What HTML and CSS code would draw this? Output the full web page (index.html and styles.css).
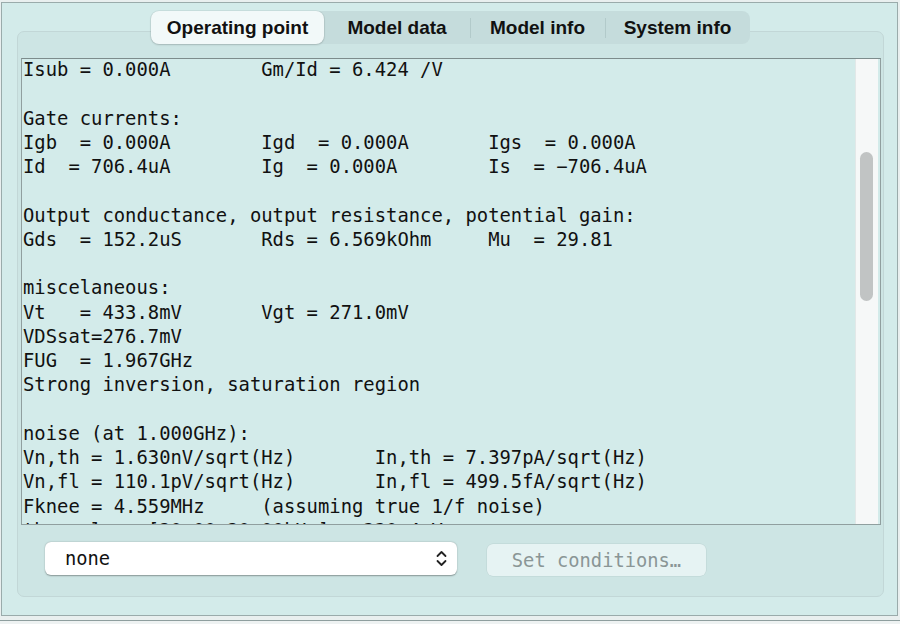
FILE: index.html
```html
<!DOCTYPE html>
<html lang="en">

<head>
    <meta charset="UTF-8">
    <title>Operating point</title>
    <link rel="stylesheet" href="styles.css">
</head>

<body>
    <div class="window">
        <!-- tab selector, sits over the top edge of the panel -->
        <div class="tabs">
            <div class="tab active">Operating point</div>
            <div class="tab">Model data</div>
            <div class="tab sep">Model info</div>
            <div class="tab sep">System info</div>
        </div>

        <div class="panel">
            <div class="output">
<pre class="report">Isub = 0.000A        Gm/Id = 6.424 /V

Gate currents:
Igb  = 0.000A        Igd  = 0.000A       Igs  = 0.000A
Id  = 706.4uA        Ig  = 0.000A        Is  = &#8722;706.4uA

Output conductance, output resistance, potential gain:
Gds  = 152.2uS       Rds = 6.569kOhm     Mu  = 29.81

miscelaneous:
Vt   = 433.8mV       Vgt = 271.0mV
VDSsat=276.7mV
FUG  = 1.967GHz
Strong inversion, saturation region

noise (at 1.000GHz):
Vn,th = 1.630nV/sqrt(Hz)       In,th = 7.397pA/sqrt(Hz)
Vn,fl = 110.1pV/sqrt(Hz)       In,fl = 499.5fA/sqrt(Hz)
Fknee = 4.559MHz     (assuming true 1/f noise)
thermal    [20.00-20.00kHz] = 330.4uV</pre>
                <div class="scrolltrack">
                    <div class="thumb"></div>
                </div>
            </div>

            <div class="controls">
                <div class="select">
                    <span>none</span>
                    <svg width="11" height="17" viewBox="0 0 11 17">
                        <path d="M1.5 6 L5.5 2 L9.5 6 M1.5 11 L5.5 15 L9.5 11" fill="none" stroke="#222" stroke-width="1.8" stroke-linecap="round" stroke-linejoin="round" />
                    </svg>
                </div>
                <div class="button">Set conditions…</div>
            </div>
        </div>
    </div>
    <div class="statusbar"></div>
</body>

</html>
```

FILE: styles.css
```css
body {
    margin: 0;
    background: #e9efef;
    font-family: "Liberation Sans", Arial, sans-serif;
}

.window {
    margin: 2px 2px 0 1px;
    height: 614px;
    box-sizing: border-box;
    border: 1px solid #9aabab;
    background: #d3ebea;
    padding: 8px 13px 18px 15px;
    display: flex;
    flex-direction: column;
}

/* segmented tab bar */
.tabs {
    align-self: center;
    display: grid;
    grid-template-columns: 173px 146px 135px 145px;
    height: 34px;
    background: #c5dcdc;
    border-radius: 8px;
    position: relative;
    z-index: 1;
}

.tab {
    display: flex;
    align-items: center;
    justify-content: center;
    font-size: 19px;
    font-weight: bold;
    color: #111;
}

.tab.sep {
    background: linear-gradient(#b2caca, #b2caca) left center / 1px 20px no-repeat;
}

.tab.active {
    background: #f2f9f9;
    border-radius: 8px;
    box-shadow: 0 0 0 1px rgba(0, 0, 0, 0.05), 0 1px 2px rgba(0, 0, 0, 0.15);
}

.panel {
    flex: 1;
    margin-top: -13px;
    border: 1px solid #c2d7d7;
    border-radius: 7px;
    background: #cde5e4;
    padding: 26px 2px 20px 3px;
}

/* text output box */
.output {
    display: flex;
    height: 467px;
    box-sizing: border-box;
    border: 1px solid #909f9f;
    border-top-color: #7d8c8c;
    background: #d3ebea;
    overflow: hidden;
}

.report {
    flex: 1;
    margin: -1px 0 0 1px;
    font-family: "DejaVu Sans Mono", monospace;
    font-size: 18.85px;
    line-height: 24.25px;
    color: #111;
    overflow: hidden;
}

.scrolltrack {
    flex-shrink: 0;
    width: 22px;
    margin-right: 2px;
    background: #f6f8f8;
    border-left: 1px solid #e2e8e8;
}

.thumb {
    margin: 93px 0 0 4px;
    width: 13px;
    height: 149px;
    border-radius: 7px;
    background: #c1c4c4;
}

/* bottom row */
.controls {
    display: flex;
    align-items: flex-start;
    gap: 30px;
    margin-top: 17px;
    padding-left: 24px;
}

.select {
    width: 412px;
    height: 33px;
    box-sizing: border-box;
    padding: 0 10px 0 20px;
    display: flex;
    align-items: center;
    justify-content: space-between;
    background: #fff;
    border-radius: 6px;
    box-shadow: 0 0.5px 1.5px rgba(0, 0, 0, 0.35);
    font-family: "DejaVu Sans Mono", monospace;
    font-size: 18.75px;
    color: #111;
}

.button {
    width: 219px;
    height: 32px;
    margin-top: 2px;
    display: flex;
    align-items: center;
    justify-content: center;
    background: #e6f3f3;
    border-radius: 6px;
    box-shadow: 0 0 0 0.5px rgba(0, 0, 0, 0.08);
    font-family: "DejaVu Sans Mono", monospace;
    font-size: 18.75px;
    color: #8a9696;
}

.statusbar {
    margin-top: 4px;
    height: 8px;
    border-top: 1px solid #8e9e9e;
    background: #eef2f2;
}
```
